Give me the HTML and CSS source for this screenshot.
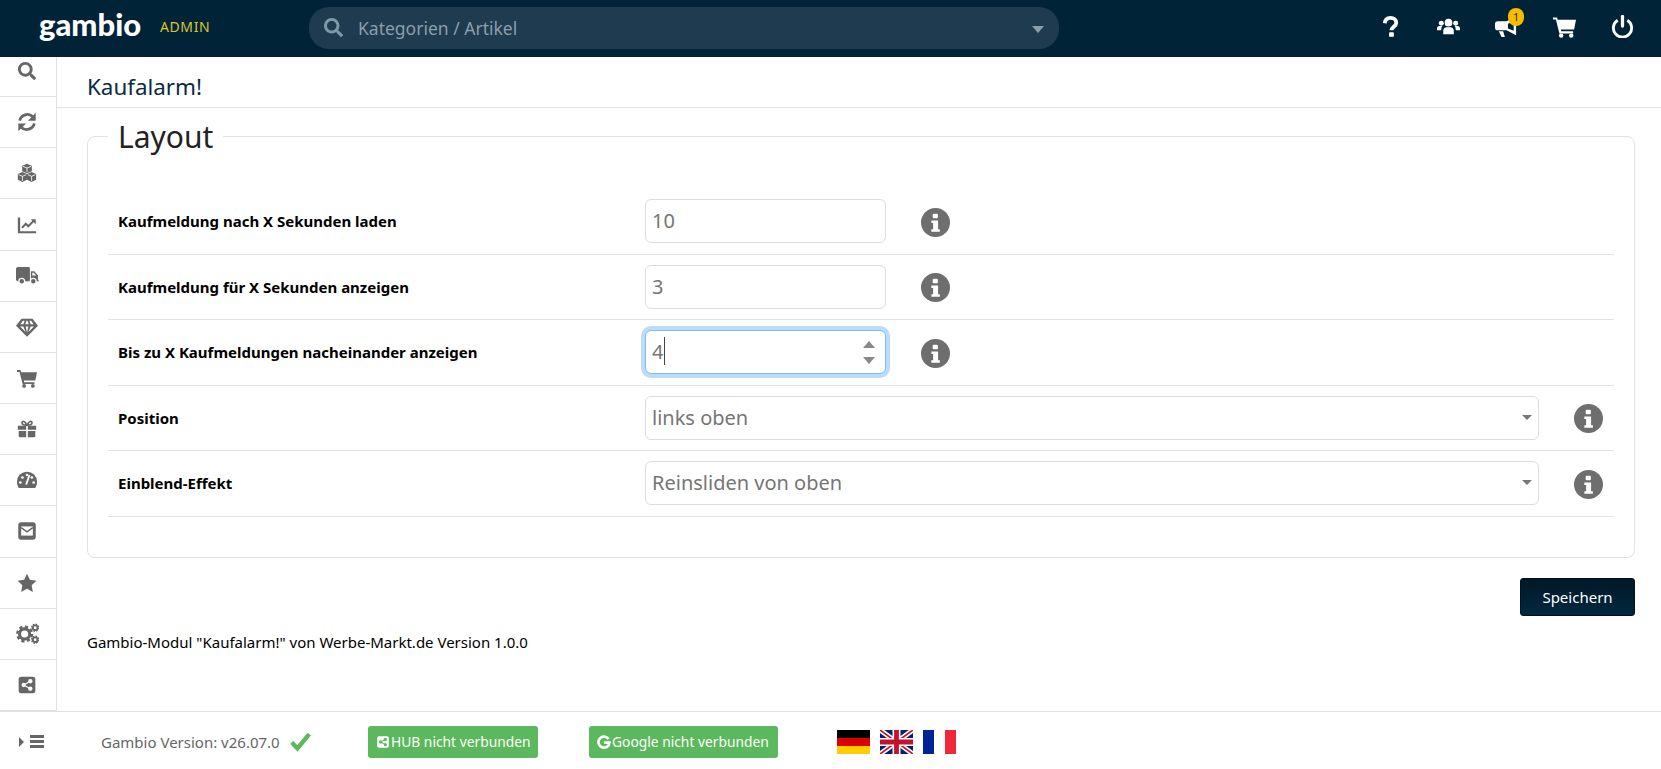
FILE: index.html
```html
<!DOCTYPE html>
<html lang="de">
<head>
    <meta charset="UTF-8">
    <meta name="viewport" content="width=device-width, initial-scale=1.0">
    <title>Kaufalarm!</title>
    <link rel="stylesheet" href="styles.css">
</head>
<body>
    <!-- icon sprite -->
    <svg class="sprite" xmlns="http://www.w3.org/2000/svg">
        <symbol id="i-search" viewBox="0 0 512 512"><path d="M505 442.7L405.3 343c-4.5-4.5-10.6-7-17-7H372c27.6-35.3 44-79.7 44-128C416 93.1 322.9 0 208 0S0 93.1 0 208s93.1 208 208 208c48.3 0 92.7-16.4 128-44v16.3c0 6.4 2.5 12.5 7 17l99.7 99.7c9.4 9.4 24.6 9.4 33.9 0l28.3-28.3c9.4-9.4 9.4-24.6.1-34zM208 336c-70.7 0-128-57.2-128-128 0-70.7 57.2-128 128-128 70.7 0 128 57.2 128 128 0 70.7-57.2 128-128 128z"/></symbol>
        <symbol id="i-refresh" viewBox="0 0 24 24"><path d="M4 10.5A8.5 8.5 0 0 1 18.3 6.3" fill="none" stroke="currentColor" stroke-width="3"/><path d="M21.5 2v8.5H13z"/><path d="M20 13.5A8.5 8.5 0 0 1 5.7 17.7" fill="none" stroke="currentColor" stroke-width="3"/><path d="M2.5 22v-8.5H11z"/></symbol>
        <symbol id="i-cubes" viewBox="0 0 24 24"><path d="M12 1l5.800 2.300v6.500L12 12.300 6.200 9.800V3.300z"/><path d="M6.500 10.800L12 13.200v6.800l-5.500 2.800L1 20v-6.800z"/><path d="M17.500 10.800l5.500 2.400v6.800l-5.500 2.800L12 20v-6.800z"/><path d="M7 4l5 2 5-2M12 6v5M2 14l4.500 2 4.500-2M6.500 16v5.500M13 14l4.500 2 4.500-2M17.500 16v5.500" fill="none" stroke="#fff" stroke-width="1"/></symbol>
        <symbol id="i-chart" viewBox="0 0 24 24"><path d="M1 3h2.800v16.500H23V22H1z"/><path d="M6 15.500l4.500-5 3 3L20 7" fill="none" stroke="currentColor" stroke-width="2.400"/><path d="M16.500 5h6v6z"/></symbol>
        <symbol id="i-truck" viewBox="0 0 24 24"><path d="M0 5a2 2 0 0 1 2-2h11a1.500 1.500 0 0 1 1.500 1.500V18H2a2 2 0 0 1-2-2z"/><path d="M15.500 7.500h3.500l4 4.500V17l1 .5V18h-8.500z"/><circle cx="6" cy="18" r="3" stroke="#fff" stroke-width="1.300"/><circle cx="18" cy="18" r="3" stroke="#fff" stroke-width="1.300"/><path d="M17 9h1.500l2.500 3h-4z" fill="#fff"/></symbol>
        <symbol id="i-diamond" viewBox="0 0 24 24"><path d="M6 3h12l6 7.500L12 22.500 0 10.500z"/><path d="M7.500 5.300h2l-1.500 3.700H4.800zM11.500 5.300h1L14 9h-4zM14.500 5.300h2L19.200 9H16zM4.500 11.500h3.500L10.500 17.500zM10.500 11.500h3L12 18zM16 11.500h3.500L13.500 17.500z" fill="#fff"/></symbol>
        <symbol id="i-cart" viewBox="0 0 24 24"><path d="M0 2.500h4.200l.7 2.500H24l-2 10H8.200l.4 2H21v2.200H6.700L3 4.700H0z"/><circle cx="8.500" cy="21.500" r="2.300"/><circle cx="19" cy="21.500" r="2.300"/></symbol>
        <symbol id="i-gift" viewBox="0 0 24 24"><path d="M1 8h10v5H1zM13 8h10v5H13zM2 14.500h9V22H3.500A1.500 1.500 0 0 1 2 20.500zM13 14.500h9v6a1.500 1.500 0 0 1-1.500 1.500H13z"/><path d="M11.500 7.500C9.500 7.500 6 7 6 4.500 6 2 10 2 11.500 7zM12.500 7.500c2 0 5.500-.5 5.500-3 0-2.500-4-2.500-5.500 2.500z" fill="none" stroke="currentColor" stroke-width="2"/></symbol>
        <symbol id="i-gauge" viewBox="0 0 24 24"><path d="M12 2A12 12 0 0 0 0 14c0 3 .8 5.500 2.300 7.500h19.400C23.200 19.500 24 17 24 14A12 12 0 0 0 12 2z"/><g fill="#fff"><circle cx="4" cy="15" r="1.600"/><circle cx="6.500" cy="9" r="1.600"/><circle cx="12" cy="6" r="1.600"/><circle cx="20" cy="15" r="1.600"/><circle cx="17.800" cy="9" r="1.600"/></g><path d="M11 17.500L15 6" stroke="#fff" stroke-width="2.200"/></symbol>
        <symbol id="i-envelope" viewBox="0 0 24 24"><rect x="1.500" y="1.500" width="21" height="21" rx="3.500"/><rect x="5" y="6.500" width="14" height="11" fill="#fff"/><path d="M5 8l7 5 7-5" fill="none" stroke="currentColor" stroke-width="1.800"/></symbol>
        <symbol id="i-star" viewBox="0 0 24 24"><path d="M12 1l3.400 7.200 7.900 1.100-5.700 5.500 1.400 7.900-7-3.800-7 3.800 1.400-7.900L.7 9.300l7.900-1.100z"/></symbol>
        <symbol id="i-cogs" viewBox="0 0 24 24"><circle cx="9" cy="12.500" r="5.300" fill="none" stroke="currentColor" stroke-width="3.200"/><circle cx="9" cy="12.500" r="7.700" fill="none" stroke="currentColor" stroke-width="2.400" stroke-dasharray="3.400 2.650"/><circle cx="20" cy="6" r="2.400" fill="none" stroke="currentColor" stroke-width="1.900"/><circle cx="20" cy="6" r="3.700" fill="none" stroke="currentColor" stroke-width="1.300" stroke-dasharray="1.700 1.200"/><circle cx="20" cy="18.500" r="2.400" fill="none" stroke="currentColor" stroke-width="1.900"/><circle cx="20" cy="18.500" r="3.700" fill="none" stroke="currentColor" stroke-width="1.300" stroke-dasharray="1.700 1.200"/></symbol>
        <symbol id="i-share" viewBox="0 0 24 24"><rect x="2" y="2" width="20" height="20" rx="3"/><g fill="#fff"><circle cx="8" cy="12" r="2.600"/><circle cx="16" cy="7.500" r="2.600"/><circle cx="16" cy="16.500" r="2.600"/></g><path d="M8 12l8-4.500M8 12l8 4.500" stroke="#fff" stroke-width="1.500"/></symbol>
        <symbol id="i-share-green" viewBox="0 0 24 24"><rect x="2" y="2" width="20" height="20" rx="3" fill="#fff"/><g fill="#5cb85c"><circle cx="8" cy="12" r="2.800"/><circle cx="16" cy="7.500" r="2.800"/><circle cx="16" cy="16.500" r="2.800"/></g><path d="M8 12l8-4.500M8 12l8 4.500" stroke="#5cb85c" stroke-width="1.700"/></symbol>
        <symbol id="i-question" viewBox="0 0 24 24"><path d="M6 8.500C6.500 4.500 9 3 12 3c3.500 0 6 2 6 5 0 4-5 4.500-5 8" fill="none" stroke="currentColor" stroke-width="4"/><rect x="10.500" y="18" width="5" height="4.800" rx="1"/></symbol>
        <symbol id="i-users" viewBox="0 0 24 24"><circle cx="12" cy="8" r="4"/><circle cx="4.500" cy="8.500" r="2.600"/><circle cx="19.500" cy="8.500" r="2.600"/><path d="M6.500 20v-3.500C6.500 14 8.500 12.800 10 12.800h4c1.500 0 3.500 1.200 3.500 3.700V20z"/><path d="M0 16v-2c0-1.500 1-2.500 2.500-2.500h3c-.7.800-1 2-1.100 4.500zM24 16v-2c0-1.500-1-2.500-2.500-2.500h-3c.7.800 1 2 1.100 4.500z"/></symbol>
        <symbol id="i-bullhorn" viewBox="0 0 24 24"><path fill-rule="evenodd" d="M22 2v19l-10-5H3a3 3 0 0 1-3-3V9.500a3 3 0 0 1 3-3h9zM19.500 6.500L13.500 9v5l6 2.500z"/><path d="M4 17h4.500l1.800 6H6.800z"/></symbol>
        <symbol id="i-power" viewBox="0 0 24 24"><path d="M7 5.500a9.500 9.500 0 1 0 10 0" fill="none" stroke="currentColor" stroke-width="3"/><path d="M12 1.500v10" stroke="currentColor" stroke-width="3.400" stroke-linecap="round"/></symbol>
        <symbol id="i-info" viewBox="0 0 28 28"><circle cx="14" cy="14" r="14"/><rect x="11.300" y="5.500" width="5" height="4.500" rx="1" fill="#fff"/><path d="M10 12h6.500v8.500h1.700V23H10v-2.500h1.700v-6H10z" fill="#fff"/></symbol>
    </svg>

    <header class="topbar">
        <div class="logo">gambio</div>
        <div class="admin-label">ADMIN</div>
        <div class="search-box">
            <svg class="search-icon"><use href="#i-search"/></svg>
            <input class="search-input" type="text" placeholder="Kategorien / Artikel">
            <span class="search-caret"></span>
        </div>
        <nav class="top-icons">
            <a class="top-icon"><svg><use href="#i-question"/></svg></a>
            <a class="top-icon"><svg><use href="#i-users"/></svg></a>
            <a class="top-icon">
                <svg><use href="#i-bullhorn"/></svg>
                <span class="badge">1</span>
            </a>
            <a class="top-icon"><svg><use href="#i-cart"/></svg></a>
            <a class="top-icon"><svg><use href="#i-power"/></svg></a>
        </nav>
    </header>

    <div class="page">
        <aside class="sidebar">
            <ul class="side-list">
                <li><svg class="side-small"><use href="#i-search"/></svg></li>
                <li><svg class="side-large"><use href="#i-refresh"/></svg></li>
                <li><svg><use href="#i-cubes"/></svg></li>
                <li><svg><use href="#i-chart"/></svg></li>
                <li><svg class="side-wide"><use href="#i-truck"/></svg></li>
                <li><svg class="side-large"><use href="#i-diamond"/></svg></li>
                <li><svg><use href="#i-cart"/></svg></li>
                <li><svg><use href="#i-gift"/></svg></li>
                <li><svg><use href="#i-gauge"/></svg></li>
                <li><svg><use href="#i-envelope"/></svg></li>
                <li><svg><use href="#i-star"/></svg></li>
                <li><svg class="side-wide"><use href="#i-cogs"/></svg></li>
                <li><svg><use href="#i-share"/></svg></li>
            </ul>
        </aside>

        <main class="content">
            <div class="page-title"><h1>Kaufalarm!</h1></div>

            <div class="content-body">
                <fieldset class="panel">
                    <legend>Layout</legend>

                    <div class="form-row">
                        <label class="form-label">Kaufmeldung nach X Sekunden laden</label>
                        <input class="field field-short" type="text" value="10">
                        <svg class="info"><use href="#i-info"/></svg>
                    </div>
                    <div class="form-row">
                        <label class="form-label">Kaufmeldung für X Sekunden anzeigen</label>
                        <input class="field field-short" type="text" value="3">
                        <svg class="info"><use href="#i-info"/></svg>
                    </div>
                    <div class="form-row">
                        <label class="form-label">Bis zu X Kaufmeldungen nacheinander anzeigen</label>
                        <div class="spin-wrap">
                            <input class="field field-short field-focus" type="text" value="4">
                            <span class="text-cursor"></span>
                            <span class="spin-up"></span>
                            <span class="spin-down"></span>
                        </div>
                        <svg class="info"><use href="#i-info"/></svg>
                    </div>
                    <div class="form-row">
                        <label class="form-label">Position</label>
                        <div class="select-wrap">
                            <select class="field field-wide">
                                <option>links oben</option>
                            </select>
                            <span class="select-caret"></span>
                        </div>
                        <svg class="info"><use href="#i-info"/></svg>
                    </div>
                    <div class="form-row">
                        <label class="form-label">Einblend-Effekt</label>
                        <div class="select-wrap">
                            <select class="field field-wide">
                                <option>Reinsliden von oben</option>
                            </select>
                            <span class="select-caret"></span>
                        </div>
                        <svg class="info"><use href="#i-info"/></svg>
                    </div>
                </fieldset>

                <div class="actions">
                    <button class="btn-save">Speichern</button>
                </div>

                <p class="module-note">Gambio-Modul "Kaufalarm!" von Werbe-Markt.de Version 1.0.0</p>
            </div>
        </main>
    </div>

    <footer class="footer">
        <div class="menu-toggle">
            <span class="toggle-caret"></span>
            <span class="toggle-bars"><i></i><i></i><i></i></span>
        </div>
        <span class="version">Gambio Version: v26.07.0</span>
        <svg class="check" viewBox="0 0 24 24"><path d="M2 13l6.500 7L22 3.500" fill="none" stroke="#5cb85c" stroke-width="5"/></svg>
        <a class="btn-status btn-hub"><svg><use href="#i-share-green"/></svg>HUB nicht verbunden</a>
        <a class="btn-status btn-google">
            <svg viewBox="0 0 24 24"><path d="M20 7A9.500 9.500 0 1 0 21.500 13H12" fill="none" stroke="#fff" stroke-width="4.500"/></svg>Google nicht verbunden
        </a>
        <div class="flags">
            <svg class="flag" viewBox="0 0 33 24">
                <rect width="33" height="8" fill="#000"/>
                <rect y="8" width="33" height="8" fill="#d00"/>
                <rect y="16" width="33" height="8" fill="#ffce00"/>
            </svg>
            <svg class="flag" viewBox="0 0 33 24">
                <rect width="33" height="24" fill="#012169"/>
                <path d="M0 0L33 24M33 0L0 24" stroke="#fff" stroke-width="5"/>
                <path d="M0 0L33 24M33 0L0 24" stroke="#c8102e" stroke-width="1.700"/>
                <path d="M16.500 0v24M0 12h33" stroke="#fff" stroke-width="8"/>
                <path d="M16.500 0v24M0 12h33" stroke="#c8102e" stroke-width="4.800"/>
            </svg>
            <svg class="flag" viewBox="0 0 33 24">
                <rect width="11" height="24" fill="#002395"/>
                <rect x="11" width="11" height="24" fill="#fff"/>
                <rect x="22" width="11" height="24" fill="#ed2939"/>
            </svg>
        </div>
    </footer>
</body>
</html>
```

FILE: styles.css
```css
:root {
    --navy: #012338;
    --border: #e2e2e2;
    --icon-gray: #666;
    --green: #5cb85c;
}

* {
    box-sizing: border-box;
}

html,
body {
    height: 100%;
}

body {
    margin: 0;
    display: flex;
    flex-direction: column;
    overflow: hidden;
    font-family: "Noto Sans", "Open Sans", sans-serif;
    font-size: 15px;
    color: #000;
    background-color: #fff;
}

.sprite {
    display: none;
}

/* top bar */
.topbar {
    flex: 0 0 57px;
    display: flex;
    align-items: center;
    padding-left: 39px;
    background-color: var(--navy);
}

.logo {
    width: 121px;
    margin-top: -8px;
    font-family: "Lato", sans-serif;
    font-size: 31px;
    font-weight: 900;
    line-height: 1;
    color: #fff;
}

.admin-label {
    width: 149px;
    margin-top: -5px;
    font-size: 14px;
    letter-spacing: 0.6px;
    color: #dcc62e;
}

.search-box {
    position: relative;
    width: 750px;
    height: 42px;
    margin-top: -2px;
    display: flex;
    align-items: center;
    padding-left: 15px;
    border-radius: 20px;
    background-color: #1e3b50;
}

.search-icon {
    width: 19px;
    height: 19px;
    fill: #7f98a8;
}

.search-input {
    flex: 1;
    height: 100%;
    margin-left: 15px;
    padding: 0;
    border: none;
    outline: none;
    background: transparent;
    font-family: inherit;
    font-size: 17.500px;
}

.search-input::placeholder {
    color: #8b9eac;
    opacity: 1;
}

.search-caret {
    position: absolute;
    right: 15px;
    top: 19px;
    border-left: 6.500px solid transparent;
    border-right: 6.500px solid transparent;
    border-top: 7px solid #8b9eac;
}

.top-icons {
    display: flex;
    margin-left: auto;
    padding: 0 10px 5px 0;
}

.top-icon {
    position: relative;
    width: 58px;
    height: 52px;
    display: flex;
    align-items: center;
    justify-content: center;
    color: #fff;
}

.top-icon svg {
    width: 23px;
    height: 23px;
    fill: currentColor;
}

.badge {
    position: absolute;
    top: 8px;
    left: 31px;
    width: 16px;
    height: 18px;
    border-radius: 8px;
    background-color: #f5bd00;
    font-size: 10px;
    line-height: 18px;
    text-align: center;
    color: #222;
}

/* page */
.page {
    flex: 1;
    min-height: 0;
    display: flex;
}

.sidebar {
    flex: 0 0 57px;
    overflow: hidden;
    border-right: 1px solid var(--border);
}

.side-list {
    list-style: none;
    margin: -11px 0 0;
    padding: 0;
}

.side-list li {
    height: 51.170px;
    display: flex;
    align-items: center;
    justify-content: center;
    padding-right: 2px;
    border-bottom: 1px solid var(--border);
    color: var(--icon-gray);
}

.side-list svg {
    width: 20px;
    height: 20px;
    fill: currentColor;
}

.side-list svg.side-small {
    width: 18px;
    height: 18px;
}

.side-list svg.side-large {
    width: 22px;
    height: 22px;
}

.side-list svg.side-wide {
    width: 23px;
    height: 23px;
}

.content {
    flex: 1;
    min-width: 0;
}

.page-title {
    height: 51px;
    display: flex;
    align-items: center;
    padding: 8px 0 0 30px;
    border-bottom: 1px solid var(--border);
}

.page-title h1 {
    margin: 0;
    font-size: 22.400px;
    font-weight: 400;
    color: #0b2b3f;
}

.content-body {
    padding: 7px 26px 0 30px;
}

/* panel */
.panel {
    margin: 0;
    min-width: 0;
    padding: 32px 20px 40px;
    border: 1px solid var(--border);
    border-radius: 8px;
}

.panel legend {
    padding: 2px 10px 0;
    font-size: 30px;
    font-weight: 400;
    line-height: 40px;
    color: #222;
}

.form-row {
    height: 65.500px;
    display: flex;
    align-items: center;
    padding-left: 10px;
    border-bottom: 1px solid var(--border);
}

.form-label {
    flex: 0 0 527px;
    font-weight: 700;
}

.field {
    height: 44px;
    padding: 0 6px 1px;
    border: 1px solid #dcdcdc;
    border-radius: 6px;
    outline: none;
    background-color: #fff;
    font-family: inherit;
    font-size: 20px;
    color: #757575;
}

.field-short {
    width: 241px;
}

.field-wide {
    width: 100%;
    appearance: none;
}

.field-focus {
    border-color: #86b7f0;
    box-shadow: 0 0 0 4px #bcdcfb;
}

.spin-wrap {
    position: relative;
    flex: 0 0 241px;
}

.text-cursor {
    position: absolute;
    left: 19px;
    top: 7px;
    width: 1px;
    height: 28px;
    background-color: #444;
}

.spin-up,
.spin-down {
    position: absolute;
    right: 11px;
    border-left: 6px solid transparent;
    border-right: 6px solid transparent;
}

.spin-up {
    top: 11px;
    border-bottom: 7px solid #888;
}

.spin-down {
    top: 27px;
    border-top: 7px solid #888;
}

.select-wrap {
    position: relative;
    flex: 0 0 894px;
}

.select-caret {
    position: absolute;
    right: 7px;
    top: 19px;
    border-left: 5px solid transparent;
    border-right: 5px solid transparent;
    border-top: 5px solid #777;
}

.info {
    flex: 0 0 29px;
    height: 29px;
    margin: 2px 0 0 35px;
    fill: #6e6e6e;
}

.actions {
    display: flex;
    justify-content: flex-end;
    margin-top: 20px;
}

.btn-save {
    width: 115px;
    height: 38px;
    border: 1px solid #00131f;
    border-radius: 3px;
    background: linear-gradient(#001826, #02283f);
    font-family: inherit;
    font-size: 15px;
    color: #fff;
}

.module-note {
    margin: 16px 0 0;
    line-height: 20px;
}

/* footer */
.footer {
    flex: 0 0 58px;
    display: flex;
    align-items: center;
    padding: 2px 0 0 19px;
    border-top: 1px solid var(--border);
}

.menu-toggle {
    display: flex;
    align-items: center;
    gap: 6px;
    width: 82px;
}

.toggle-caret {
    border-top: 5px solid transparent;
    border-bottom: 5px solid transparent;
    border-left: 5px solid #666;
}

.toggle-bars {
    display: flex;
    flex-direction: column;
    gap: 2px;
}

.toggle-bars i {
    display: block;
    width: 14px;
    height: 3px;
    background-color: #666;
}

.version {
    width: 189px;
    color: #666;
}

.check {
    width: 21px;
    height: 21px;
}

.btn-status {
    height: 32px;
    display: flex;
    align-items: center;
    gap: 1px;
    padding-left: 8px;
    border-radius: 3px;
    background-color: var(--green);
    font-size: 13.800px;
    white-space: nowrap;
    color: #fff;
}

.btn-status svg {
    flex: 0 0 14px;
    width: 14px;
    height: 14px;
    fill: #fff;
}

.btn-hub {
    width: 170px;
    margin-left: 57px;
}

.btn-google {
    width: 189px;
    margin-left: 51px;
}

.flags {
    display: flex;
    gap: 10px;
    margin-left: 59px;
}

.flag {
    width: 33px;
    height: 24px;
}
```
